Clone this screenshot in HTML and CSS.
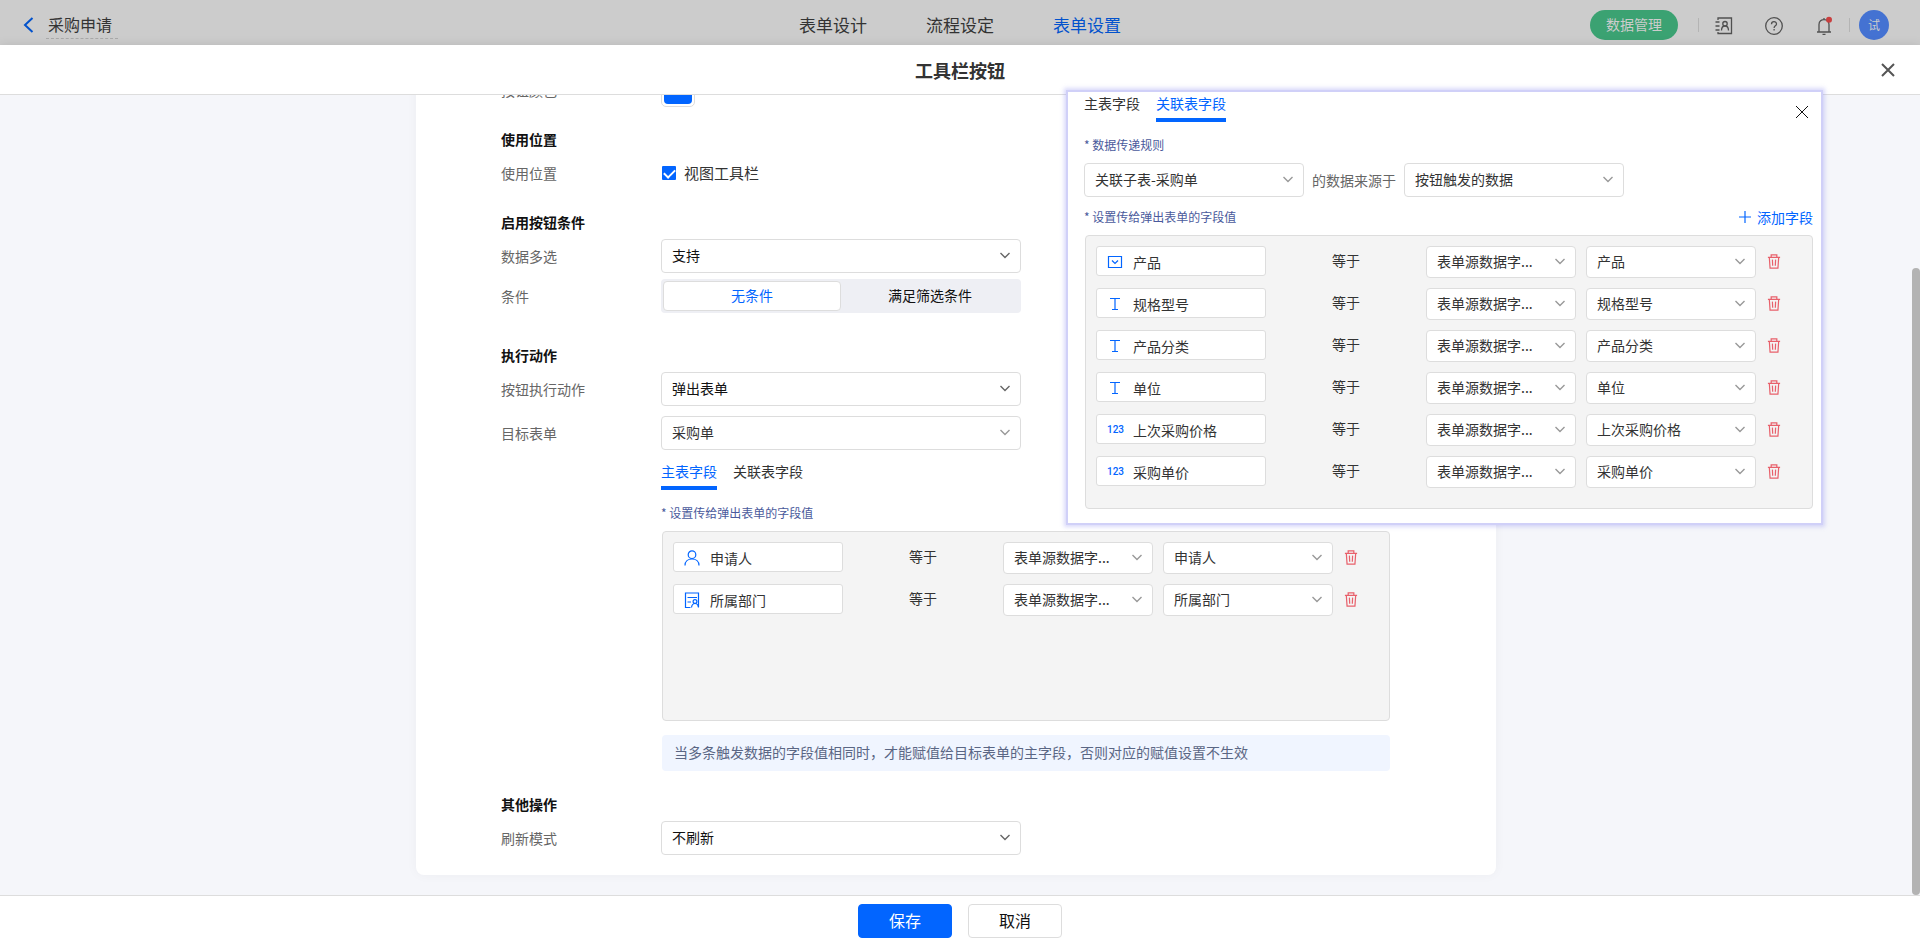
FILE: index.html
```html
<!DOCTYPE html>
<html lang="zh-CN">
  <head>
    <meta charset="UTF-8" />
    <meta name="viewport" content="width=device-width, initial-scale=1.0" />
    <title>工具栏按钮</title>
    <link rel="stylesheet" href="styles.css">
  </head>
  <body>
    <!-- Shared icons -->
    <svg class="sprite" aria-hidden="true">
      <symbol id="i-arrow" viewBox="0 0 10 7">
        <path d="M0.5 1 L5 5.5 L9.5 1" fill="none" stroke="currentColor" stroke-width="1.4" />
      </symbol>
      <symbol id="i-trash" viewBox="0 0 14 16">
        <path d="M0.5 3.5h13M4 3.5V1h6v2.5M2 3.5l0.8 11.500h8.4l0.8-11.500M5.3 6l0.3 6.5M8.7 6l-0.3 6.5" fill="none" stroke="currentColor" stroke-width="1.300" />
      </symbol>
      <symbol id="i-close" viewBox="0 0 14 14">
        <path d="M1 1l12 12M13 1L1 13" fill="none" stroke="currentColor" />
      </symbol>
      <symbol id="i-user" viewBox="0 0 16 16">
        <path d="M1 15.5c0-4 3-6.500 7-6.500s7 2.500 7 6.500" fill="none" stroke="currentColor" stroke-width="1.200" />
        <circle cx="8" cy="4.700" r="3.800" fill="#fff" stroke="currentColor" stroke-width="1.200" />
      </symbol>
      <symbol id="i-dept" viewBox="0 0 16 16">
        <path d="M6.500 15.500H1.500V1h13v14M3.500 5.500h9.500M3.500 10h3.500" fill="none" stroke="currentColor" stroke-width="1.200" />
        <circle cx="11" cy="9.500" r="1.900" fill="none" stroke="currentColor" stroke-width="1.200" />
        <path d="M7.500 15.500c0.300-2.500 1.600-4 3.500-4s3.200 1.500 3.500 4" fill="none" stroke="currentColor" stroke-width="1.200" />
      </symbol>
      <symbol id="i-select" viewBox="0 0 16 16">
        <path d="M1.500 2.500h13v11h-13zM5 6.500l3 3 3-3" fill="none" stroke="currentColor" stroke-width="1.200" />
      </symbol>
      <symbol id="i-text" viewBox="0 0 16 16">
        <path d="M3 2.500h10M8 2.500v11M5 13.500h6" fill="none" stroke="currentColor" stroke-width="1.200" />
      </symbol>
    </svg>

    <header class="topbar">
      <div class="topbar-left">
        <a class="back" href="#" aria-label="返回">
          <svg width="11" height="16" viewBox="0 0 11 16"><path d="M9.500 1L2 8l7.500 7" fill="none" stroke="currentColor" stroke-width="2" /></svg>
        </a>
        <span class="form-name">采购申请</span>
      </div>
      <nav class="topnav">
        <a href="#">表单设计</a>
        <a href="#">流程设定</a>
        <a class="active" href="#">表单设置</a>
      </nav>
      <div class="topbar-right">
        <button class="pill" type="button">数据管理</button>
        <i class="divider"></i>
        <div class="tools">
          <button class="icon-btn" type="button" aria-label="通讯录">
            <svg width="18" height="18" viewBox="0 0 18 18" fill="none" stroke="currentColor" stroke-width="1.300">
              <path d="M3 3V1h13.500v15.500H3V15M0.500 5h4M0.500 9h4M0.500 13h4" />
              <circle cx="10" cy="6.700" r="2.200" />
              <path d="M6.500 13.500c0-3 1.300-4.500 3.500-4.500s3.500 1.500 3.500 4.500" />
            </svg>
          </button>
          <button class="icon-btn" type="button" aria-label="帮助">
            <svg width="18" height="18" viewBox="0 0 18 18" fill="none" stroke="currentColor" stroke-width="1.300">
              <circle cx="9" cy="9" r="8.300" />
              <path d="M6.500 7.200c0-3.400 5-3.200 5-0.300 0 1.900-2.400 1.900-2.400 4M9.100 12v1.600" />
            </svg>
          </button>
          <button class="icon-btn" type="button" aria-label="消息">
            <svg width="18" height="18" viewBox="0 0 18 18" fill="none" stroke="currentColor" stroke-width="1.300">
              <path d="M2 15h14M4 15V7.500c0-6.500 10-6.500 10 0V15M7.500 17.300h3M9 1v1.500" />
              <circle cx="14" cy="2.700" r="3" fill="#c93f3f" stroke="none" />
            </svg>
          </button>
        </div>
        <i class="divider"></i>
        <span class="avatar">试</span>
      </div>
    </header>

    <main class="dialog">
      <div class="dialog-header">
        <h1>工具栏按钮</h1>
        <button class="dialog-close" type="button" aria-label="关闭">
          <svg width="14" height="14"><use href="#i-close" /></svg>
        </button>
      </div>

      <div class="dialog-body">
        <div class="viewport">
          <form class="card">
            <section class="section">
              <div class="row">
                <span class="label">按钮颜色</span>
                <button class="swatch" type="button" aria-label="按钮颜色"><i></i></button>
              </div>
            </section>

            <section class="section">
              <h2>使用位置</h2>
              <div class="row">
                <span class="label">使用位置</span>
                <label class="check"><input type="checkbox" checked />视图工具栏</label>
              </div>
            </section>

            <section class="section section-wide">
              <h2>启用按钮条件</h2>
              <div class="row">
                <label class="label" for="multi">数据多选</label>
                <div class="select select-lg dark">
                  <select id="multi"><option>支持</option></select>
                  <svg><use href="#i-arrow" /></svg>
                </div>
              </div>
              <div class="row">
                <span class="label">条件</span>
                <div class="segment">
                  <button class="active" type="button">无条件</button>
                  <button type="button">满足筛选条件</button>
                </div>
              </div>
            </section>

            <section class="section section-action">
              <h2>执行动作</h2>
              <div class="row">
                <label class="label" for="action">按钮执行动作</label>
                <div class="select select-lg dark">
                  <select id="action"><option>弹出表单</option></select>
                  <svg><use href="#i-arrow" /></svg>
                </div>
              </div>
              <div class="row row-target">
                <label class="label" for="target">目标表单</label>
                <div class="select select-lg">
                  <select id="target"><option>采购单</option></select>
                  <svg><use href="#i-arrow" /></svg>
                </div>
              </div>
              <div class="nested">
                <div class="tabs">
                  <button class="active" type="button">主表字段</button>
                  <button type="button">关联表字段</button>
                </div>
                <p class="hint">* 设置传给弹出表单的字段值</p>
                <div class="mapping">
                  <div class="map-row">
                    <div class="field"><svg><use href="#i-user" /></svg>申请人</div>
                    <span class="operator">等于</span>
                    <div class="select source">
                      <select aria-label="来源"><option>表单源数据字...</option></select>
                      <svg><use href="#i-arrow" /></svg>
                    </div>
                    <div class="select value">
                      <select aria-label="字段"><option>申请人</option></select>
                      <svg><use href="#i-arrow" /></svg>
                    </div>
                    <button class="remove" type="button" aria-label="删除"><svg><use href="#i-trash" /></svg></button>
                  </div>
                  <div class="map-row">
                    <div class="field"><svg><use href="#i-dept" /></svg>所属部门</div>
                    <span class="operator">等于</span>
                    <div class="select source">
                      <select aria-label="来源"><option>表单源数据字...</option></select>
                      <svg><use href="#i-arrow" /></svg>
                    </div>
                    <div class="select value">
                      <select aria-label="字段"><option>所属部门</option></select>
                      <svg><use href="#i-arrow" /></svg>
                    </div>
                    <button class="remove" type="button" aria-label="删除"><svg><use href="#i-trash" /></svg></button>
                  </div>
                </div>
                <p class="notice">当多条触发数据的字段值相同时，才能赋值给目标表单的主字段，否则对应的赋值设置不生效</p>
              </div>
            </section>

            <section class="section">
              <h2>其他操作</h2>
              <div class="row">
                <label class="label" for="refresh">刷新模式</label>
                <div class="select select-lg dark">
                  <select id="refresh"><option>不刷新</option></select>
                  <svg><use href="#i-arrow" /></svg>
                </div>
              </div>
            </section>
          </form>
        </div>
        <div class="scrollbar"><i></i></div>
      </div>

      <div class="dialog-footer">
        <button class="btn primary" type="button">保存</button>
        <button class="btn" type="button">取消</button>
      </div>
    </main>

    <!-- Related table panel, floats over the dialog -->
    <aside class="popup">
      <button class="popup-close" type="button" aria-label="关闭">
        <svg width="14" height="14"><use href="#i-close" /></svg>
      </button>
      <div class="tabs">
        <button type="button">主表字段</button>
        <button class="active" type="button">关联表字段</button>
      </div>
      <p class="hint">* 数据传递规则</p>
      <div class="rule">
        <div class="select">
          <select aria-label="关联子表"><option>关联子表-采购单</option></select>
          <svg><use href="#i-arrow" /></svg>
        </div>
        <span>的数据来源于</span>
        <div class="select">
          <select aria-label="数据来源"><option>按钮触发的数据</option></select>
          <svg><use href="#i-arrow" /></svg>
        </div>
      </div>
      <div class="hint-row">
        <p class="hint">* 设置传给弹出表单的字段值</p>
        <button class="add" type="button">
          <svg width="12" height="12" viewBox="0 0 12 12"><path d="M6 0v12M0 6h12" stroke="currentColor" stroke-width="1.200" /></svg>
          添加字段
        </button>
      </div>
      <div class="mapping">
        <div class="map-row">
          <div class="field"><svg><use href="#i-select" /></svg>产品</div>
          <span class="operator">等于</span>
          <div class="select source">
            <select aria-label="来源"><option>表单源数据字...</option></select>
            <svg><use href="#i-arrow" /></svg>
          </div>
          <div class="select value">
            <select aria-label="字段"><option>产品</option></select>
            <svg><use href="#i-arrow" /></svg>
          </div>
          <button class="remove" type="button" aria-label="删除"><svg><use href="#i-trash" /></svg></button>
        </div>
        <div class="map-row">
          <div class="field"><svg><use href="#i-text" /></svg>规格型号</div>
          <span class="operator">等于</span>
          <div class="select source">
            <select aria-label="来源"><option>表单源数据字...</option></select>
            <svg><use href="#i-arrow" /></svg>
          </div>
          <div class="select value">
            <select aria-label="字段"><option>规格型号</option></select>
            <svg><use href="#i-arrow" /></svg>
          </div>
          <button class="remove" type="button" aria-label="删除"><svg><use href="#i-trash" /></svg></button>
        </div>
        <div class="map-row">
          <div class="field"><svg><use href="#i-text" /></svg>产品分类</div>
          <span class="operator">等于</span>
          <div class="select source">
            <select aria-label="来源"><option>表单源数据字...</option></select>
            <svg><use href="#i-arrow" /></svg>
          </div>
          <div class="select value">
            <select aria-label="字段"><option>产品分类</option></select>
            <svg><use href="#i-arrow" /></svg>
          </div>
          <button class="remove" type="button" aria-label="删除"><svg><use href="#i-trash" /></svg></button>
        </div>
        <div class="map-row">
          <div class="field"><svg><use href="#i-text" /></svg>单位</div>
          <span class="operator">等于</span>
          <div class="select source">
            <select aria-label="来源"><option>表单源数据字...</option></select>
            <svg><use href="#i-arrow" /></svg>
          </div>
          <div class="select value">
            <select aria-label="字段"><option>单位</option></select>
            <svg><use href="#i-arrow" /></svg>
          </div>
          <button class="remove" type="button" aria-label="删除"><svg><use href="#i-trash" /></svg></button>
        </div>
        <div class="map-row">
          <div class="field"><b>123</b>上次采购价格</div>
          <span class="operator">等于</span>
          <div class="select source">
            <select aria-label="来源"><option>表单源数据字...</option></select>
            <svg><use href="#i-arrow" /></svg>
          </div>
          <div class="select value">
            <select aria-label="字段"><option>上次采购价格</option></select>
            <svg><use href="#i-arrow" /></svg>
          </div>
          <button class="remove" type="button" aria-label="删除"><svg><use href="#i-trash" /></svg></button>
        </div>
        <div class="map-row">
          <div class="field"><b>123</b>采购单价</div>
          <span class="operator">等于</span>
          <div class="select source">
            <select aria-label="来源"><option>表单源数据字...</option></select>
            <svg><use href="#i-arrow" /></svg>
          </div>
          <div class="select value">
            <select aria-label="字段"><option>采购单价</option></select>
            <svg><use href="#i-arrow" /></svg>
          </div>
          <button class="remove" type="button" aria-label="删除"><svg><use href="#i-trash" /></svg></button>
        </div>
      </div>
    </aside>
  </body>
</html>
```

FILE: styles.css
```css
/* General styles */
* {
  box-sizing: border-box;
}

body {
  margin: 0;
  height: 100vh;
  display: flex;
  flex-direction: column;
  position: relative;
  overflow: hidden;
  font-family: "Noto Sans CJK SC", "Noto Sans", sans-serif;
  font-size: 14px;
  line-height: 20px;
  color: #333;
  background-color: #ccc;
}

h1,
h2,
p {
  margin: 0;
}

a {
  color: inherit;
  text-decoration: none;
}

button,
input,
select {
  font: inherit;
  color: inherit;
}

button {
  padding: 0;
  border: none;
  background: none;
  cursor: pointer;
}

svg {
  display: block;
}

.sprite {
  display: none;
}

/* Top bar */
.topbar {
  flex: none;
  height: 45px;
  display: grid;
  grid-template-columns: 1fr auto 1fr;
  align-items: center;
}

.topbar-left {
  display: flex;
  align-items: center;
  padding-left: 23px;
}

.back {
  padding-top: 4px;
  color: #0252cc;
}

.form-name {
  margin-left: 12px;
  padding: 5px 6px 2px 2px;
  border-bottom: 1px dashed #aaa;
  font-size: 16px;
  line-height: 24px;
}

.topnav {
  display: flex;
  gap: 59px;
  padding-top: 4px;
  font-size: 17px;
  line-height: 24px;
}

.topnav .active {
  color: #0252cc;
}

.topbar-right {
  display: flex;
  justify-content: flex-end;
  align-items: center;
  padding: 5px 31px 0 0;
}

.pill {
  width: 88px;
  height: 30px;
  margin-right: 20px;
  padding-bottom: 2px;
  border-radius: 15px;
  background-color: #3ba272;
  color: #ccc;
}

.divider {
  width: 1px;
  height: 14px;
  background-color: #b4b4b4;
}

.tools {
  display: flex;
  gap: 32px;
  margin: 2px 16px 0;
}

.icon-btn {
  color: #505050;
}

.icon-btn svg {
  overflow: visible;
}

.avatar {
  width: 30px;
  margin-left: 9px;
  border-radius: 50%;
  background-color: #4472d2;
  color: #ccc;
  font-size: 12px;
  line-height: 30px;
  text-align: center;
}

/* Dialog */
.dialog {
  flex: 1;
  min-height: 0;
  display: flex;
  flex-direction: column;
  background-color: #f5f6fa;
  box-shadow: 0 0 10px rgba(0, 0, 0, 0.1);
}

.dialog-header {
  flex: none;
  height: 50px;
  display: grid;
  grid-template-columns: 1fr auto 1fr;
  align-items: center;
  background-color: #fff;
  border-bottom: 1px solid #ddd;
}

.dialog-header h1 {
  grid-column: 2;
  font-size: 18px;
  line-height: 26px;
}

.dialog-close {
  justify-self: end;
  margin-right: 25px;
  color: #555;
}

.dialog-close svg {
  stroke-width: 2px;
}

.dialog-body {
  flex: 1;
  min-height: 0;
  display: flex;
}

/* keeps the end of the form in view */
.viewport {
  flex: 1;
  overflow: hidden;
  display: flex;
  flex-direction: column;
  justify-content: flex-end;
  align-items: center;
  padding-bottom: 20px;
}

.scrollbar {
  width: 8px;
  display: flex;
  padding-top: 173px;
}

.scrollbar i {
  flex: 1;
  border-radius: 4px;
  background-color: #b3b3b3;
}

.card {
  flex: none;
  width: 100%;
  max-width: 1080px;
  padding: 60px 106px 20px 85px;
  border-radius: 8px;
  background-color: #fff;
  box-shadow: 0 0 12px rgba(0, 0, 0, 0.04);
}

.section {
  margin-bottom: 22px;
}

.section-wide {
  margin-bottom: 32px;
}

.section-action {
  margin-bottom: 23px;
}

.section:last-child {
  margin-bottom: 0;
}

.section h2 {
  margin-bottom: 7px;
  font-size: 14px;
  line-height: 20px;
  color: #111;
}

.row {
  display: grid;
  grid-template-columns: 160px 1fr;
  align-items: center;
  min-height: 34px;
}

.row + .row {
  margin-top: 6px;
}

.row + .row-target {
  margin-top: 10px;
}

.label {
  color: #666;
}

.nested {
  margin: 11px 0 0 160px;
}

.swatch {
  width: 34px;
  height: 34px;
  padding: 2px;
  border: 1px solid #ddd;
  border-radius: 5px;
}

.swatch i {
  display: block;
  height: 28px;
  border-radius: 4px;
  background-color: #0265ff;
}

.check {
  display: flex;
  align-items: center;
  gap: 8px;
  margin-left: 1px;
  font-size: 15px;
}

.check input {
  appearance: none;
  width: 14px;
  height: 14px;
  margin: 0;
  border-radius: 1px;
  background-color: #0265ff;
}

.check input:checked::after {
  content: "";
  display: block;
  width: 5px;
  height: 9px;
  margin: 1px 0 0 4px;
  border: solid #fff;
  border-width: 0 2px 2px 0;
  transform: rotate(45deg);
}

/* Drop-downs */
.select {
  position: relative;
  color: #333;
}

.select select {
  appearance: none;
  display: block;
  width: 100%;
  height: 34px;
  padding: 0 24px 2px 10px;
  border: 1px solid #ddd;
  border-radius: 4px;
  background-color: #fff;
}

.select svg {
  position: absolute;
  top: 50%;
  right: 11px;
  width: 10px;
  height: 7px;
  margin-top: -4px;
  color: #999;
  pointer-events: none;
}

.select.dark {
  color: #111;
}

.select.dark svg {
  color: #666;
}

.select-lg {
  max-width: 360px;
}

.segment {
  display: flex;
  max-width: 360px;
  height: 34px;
  padding: 2px;
  border-radius: 4px;
  background-color: #eeeff4;
}

.segment button {
  width: 50%;
  padding-bottom: 2px;
  border-radius: 4px;
  color: #111;
}

.segment .active {
  border: 1px solid #ddd;
  background-color: #fff;
  color: #0265ff;
}

/* Field mapping */
.tabs {
  display: flex;
  gap: 16px;
}

.tabs button {
  height: 29px;
  padding-bottom: 7px;
  border-bottom: 4px solid transparent;
}

.tabs .active {
  border-color: #0265ff;
  color: #0265ff;
}

.hint {
  font-size: 12px;
  color: #4a5a9c;
}

.tabs + .hint {
  margin: 13px 0 8px;
}

.mapping {
  min-height: 190px;
  margin-left: 1px;
  padding: 10px;
  border: 1px solid #ddd;
  border-radius: 4px;
  background-color: #f4f4f4;
}

.map-row {
  display: flex;
  align-items: flex-start;
  height: 32px;
  margin-bottom: 10px;
}

.field {
  display: flex;
  align-items: center;
  width: 170px;
  height: 30px;
  padding: 2px 10px 0;
  border: 1px solid #ddd;
  border-radius: 3px;
  background-color: #fff;
}

.field svg {
  width: 16px;
  height: 16px;
  margin-right: 10px;
  color: #0265ff;
}

.field b {
  width: 26px;
  font-family: Roboto, sans-serif;
  font-size: 10px;
  font-weight: 500;
  color: #0265ff;
}

.operator {
  width: 160px;
  line-height: 28px;
  text-align: center;
}

.map-row select {
  height: 32px;
}

.source {
  width: 150px;
  margin-right: 10px;
}

.value {
  width: 170px;
}

.remove {
  height: 30px;
  margin-left: 11px;
  color: #e8606b;
}

.remove svg {
  width: 14px;
  height: 15px;
}

.notice {
  margin: 14px 0 0 1px;
  padding: 0 12px 2px;
  border-radius: 4px;
  background-color: #f0f5ff;
  line-height: 34px;
  color: #5a6684;
}

/* Footer */
.dialog-footer {
  flex: none;
  height: 50px;
  display: flex;
  justify-content: center;
  align-items: center;
  gap: 16px;
  border-top: 1px solid #ddd;
  background-color: #fff;
}

.btn {
  width: 94px;
  height: 34px;
  padding-bottom: 2px;
  border: 1px solid #ddd;
  border-radius: 4px;
  font-size: 16px;
  color: #111;
}

.btn.primary {
  border-color: #0265ff;
  background-color: #0265ff;
  color: #fff;
}

/* Floating panel */
.popup {
  position: absolute;
  top: 90px;
  right: 97px;
  width: 757px;
  padding: 1px 8px 14px 16px;
  border: 2px solid #d0d0f8;
  background-color: #fff;
  box-shadow: 0 0 4px 2px rgba(150, 150, 240, 0.35);
}

.popup-close {
  position: absolute;
  top: 13px;
  right: 12px;
  color: #111;
}

.rule {
  display: flex;
  align-items: center;
  gap: 8px;
  color: #666;
}

.rule .select {
  width: 220px;
}

.hint-row {
  display: flex;
  justify-content: space-between;
  align-items: center;
  margin: 10px 0 8px;
}

.add {
  display: flex;
  align-items: center;
  gap: 6px;
  color: #0265ff;
}
```
